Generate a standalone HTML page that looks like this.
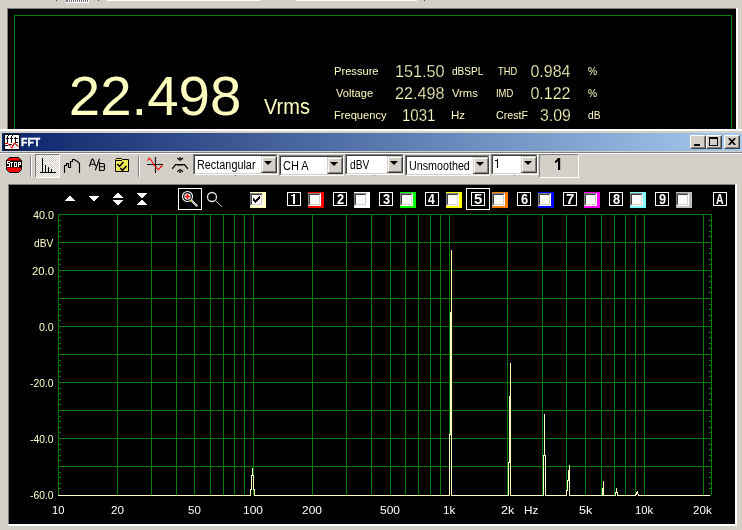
<!DOCTYPE html>
<html><head><meta charset="utf-8"><title>FFT</title>
<style>
html,body{margin:0;padding:0;}
body{width:742px;height:530px;background:#d4d0c8;position:relative;overflow:hidden;font-family:"Liberation Sans",sans-serif;}
.a{position:absolute;}
.t{position:absolute;white-space:nowrap;line-height:1;transform-origin:0 50%;}
.combo{position:absolute;box-sizing:border-box;height:21px;background:#fff;border:1px solid;border-color:#808080 #fff #fff #808080;}
.combo i{position:absolute;left:0;top:0;right:0;bottom:0;border:1px solid;border-color:#404040 #d4d0c8 #d4d0c8 #404040;}
.combo b{position:absolute;right:0;top:1px;width:16px;height:17px;box-sizing:border-box;background:#d4d0c8;border:1px solid;border-color:#d4d0c8 #404040 #404040 #d4d0c8;}
.combo b:before{content:"";position:absolute;left:0;top:0;right:0;bottom:0;border:1px solid;border-color:#fff #808080 #808080 #fff;}
.combo b:after{content:"";position:absolute;left:2px;top:4px;border:4px solid transparent;border-top:4px solid #000;border-bottom:none;width:0;height:0;}
.nb{position:absolute;box-sizing:border-box;width:14px;height:14px;border:1px solid #fff;}
.cb{position:absolute;width:16px;height:16px;}
.cb i{position:absolute;left:0;top:1px;width:13px;height:13px;box-sizing:border-box;background:#fff;border:1px solid;border-color:#808080 #fff #fff #808080;}
.cb i:before{content:"";position:absolute;left:0;top:0;right:0;bottom:0;border:1px solid;border-color:#404040 #d4d0c8 #d4d0c8 #404040;}
.wb{position:absolute;top:135px;width:16px;height:14px;box-sizing:border-box;background:#d4d0c8;border:1px solid;border-color:#fff #404040 #404040 #fff;}
.wb:before{content:"";position:absolute;left:0;top:0;right:0;bottom:0;border:1px solid;border-color:#d4d0c8 #808080 #808080 #d4d0c8;}
</style></head><body>

<div class="a" style="left:66px;top:0;width:23px;height:3px;background:#fff"></div>
<div class="a" style="left:67px;top:0;width:21px;height:2px;background:repeating-linear-gradient(to right,#707070 0,#707070 1px,#fff 1px,#fff 2px)"></div>
<div class="a" style="left:66px;top:0;width:1px;height:2px;background:#808080"></div>
<div class="a" style="left:56px;top:0;width:1px;height:1px;background:#404040"></div>
<div class="a" style="left:98px;top:0;width:1px;height:1px;background:#404040"></div>
<div class="a" style="left:424px;top:0;width:1px;height:1px;background:#404040"></div>
<div class="a" style="left:107px;top:0;width:153px;height:1px;background:#fff"></div>
<div class="a" style="left:296px;top:0;width:121px;height:1px;background:#fff"></div>
<div class="a" style="left:7px;top:8px;width:731px;height:121px;background:#fff"></div>
<div class="a" style="left:7px;top:8px;width:729px;height:121px;background:#808080"></div>
<div class="a" style="left:8px;top:9px;width:728px;height:120px;background:#000"></div>
<div class="a" style="left:14px;top:15px;width:716px;height:114px;border:1px solid #008000;border-bottom:none"></div>
<div class="a" style="left:0;top:129px;width:742px;height:2px;background:#fff"></div>
<div class="a" style="left:0;top:131px;width:742px;height:54px;background:#d4d0c8"></div>
<div class="a" style="left:2px;top:133px;width:740px;height:18px;background:linear-gradient(to right,#0a246a,#a6caf0)"></div>
<svg class="a" style="left:0;top:130px" width="24" height="24" viewBox="0 130 24 24">
<rect x="4" y="134" width="16" height="16" fill="#000"/><rect x="5" y="135" width="14" height="14" fill="#fff"/>
<g shape-rendering="crispEdges" fill="#000">
<rect x="7" y="136" width="1" height="7"/><rect x="6" y="138" width="3" height="1"/><rect x="8" y="135" width="1" height="1"/>
<rect x="11" y="136" width="1" height="7"/><rect x="10" y="138" width="3" height="1"/><rect x="12" y="135" width="1" height="1"/>
<rect x="15" y="137" width="1" height="6"/><rect x="14" y="138" width="4" height="1"/><rect x="16" y="142" width="2" height="1"/>
</g>
<path d="M5 145.500H8L9 144.500H11.500L12.500 145.500H13.500L14.500 143L18 146.500" stroke="#000" stroke-width="1" fill="none"/>
<path d="M5 143.500H8L12 148.300L13.800 143.500H15.500L18.500 146.500" stroke="#f00" stroke-width="1" fill="none"/>
</svg>
<div class="wb" style="left:690px"><div class="a" style="left:3px;top:8px;width:6px;height:2px;background:#000"></div></div>
<div class="wb" style="left:706px"><div class="a" style="left:2px;top:1px;width:9px;height:9px;box-sizing:border-box;border:1px solid #000;border-top-width:2px"></div></div>
<div class="wb" style="left:724px"><svg class="a" style="left:3px;top:2px" width="8" height="7" viewBox="0 0 8 7"><path d="M0.800 0L7.200 7M7.200 0L0.800 7" stroke="#000" stroke-width="1.700" fill="none"/></svg></div>
<div class="a" style="left:0;top:152px;width:742px;height:1px;background:#808080"></div>
<div class="a" style="left:0;top:153px;width:742px;height:1px;background:#fff"></div>
<div class="a" style="left:35px;top:154px;width:25px;height:24px;box-sizing:border-box;background:repeating-conic-gradient(#fff 0% 25%,#d4d0c8 0% 50%) 0 0/2px 2px;border:1px solid;border-color:#808080 #fff #fff #808080"></div>
<svg class="a" style="left:0;top:150px" width="200" height="32" viewBox="0 150 200 32">
<!-- stop -->
<polygon points="9.500,157.500 18.500,157.500 21.500,160.500 21.500,169.500 18.500,172.500 9.500,172.500 6.500,169.500 6.500,160.500" fill="#f00" stroke="#000" stroke-width="1"/>
<rect x="6.500" y="160.500" width="15" height="7" fill="#000"/>
<g shape-rendering="crispEdges" fill="#fff"><rect x="7" y="161" width="1" height="1"/><rect x="8" y="161" width="1" height="1"/><rect x="9" y="161" width="1" height="1"/><rect x="7" y="162" width="1" height="1"/><rect x="7" y="163" width="1" height="1"/><rect x="8" y="163" width="1" height="1"/><rect x="9" y="163" width="1" height="1"/><rect x="9" y="164" width="1" height="1"/><rect x="9" y="165" width="1" height="1"/><rect x="7" y="166" width="1" height="1"/><rect x="8" y="166" width="1" height="1"/><rect x="9" y="166" width="1" height="1"/><rect x="10" y="162" width="1" height="1"/><rect x="11" y="162" width="1" height="1"/><rect x="12" y="162" width="1" height="1"/><rect x="11" y="163" width="1" height="1"/><rect x="11" y="164" width="1" height="1"/><rect x="11" y="165" width="1" height="1"/><rect x="11" y="166" width="1" height="1"/><rect x="14" y="162" width="1" height="1"/><rect x="15" y="162" width="1" height="1"/><rect x="16" y="162" width="1" height="1"/><rect x="14" y="163" width="1" height="1"/><rect x="16" y="163" width="1" height="1"/><rect x="14" y="164" width="1" height="1"/><rect x="16" y="164" width="1" height="1"/><rect x="14" y="165" width="1" height="1"/><rect x="16" y="165" width="1" height="1"/><rect x="14" y="166" width="1" height="1"/><rect x="15" y="166" width="1" height="1"/><rect x="16" y="166" width="1" height="1"/><rect x="18" y="162" width="1" height="1"/><rect x="19" y="162" width="1" height="1"/><rect x="20" y="162" width="1" height="1"/><rect x="18" y="163" width="1" height="1"/><rect x="20" y="163" width="1" height="1"/><rect x="18" y="164" width="1" height="1"/><rect x="19" y="164" width="1" height="1"/><rect x="20" y="164" width="1" height="1"/><rect x="18" y="165" width="1" height="1"/><rect x="18" y="166" width="1" height="1"/></g>
<!-- bars -->
<g shape-rendering="crispEdges" fill="#000">
<rect x="42" y="158" width="1" height="15"/><rect x="45" y="165" width="1" height="8"/><rect x="48" y="167" width="1" height="6"/><rect x="51" y="169" width="1" height="4"/><rect x="40" y="172" width="16" height="1"/>
</g>
<!-- mountain -->
<path d="M64.500 173V165.500H66.500V163.500H68.500V167.500H70.500V161.500H72.500V159.500H74.500L75.500 160.500L77.500 161.500L78.500 162.500L79.500 163.500V173" stroke="#000" stroke-width="1.150" fill="none" stroke-linejoin="miter"/>
<!-- A/B -->
<g stroke="#000" stroke-width="1.100" fill="none">
<path d="M89.300 166.500L90.500 163.500L91.500 160L92.500 159L93.500 160L94.500 163.500L95.700 166.200M90.500 164.300H94.500"/>
<path d="M99.500 158.800L95.300 170.400"/>
<path d="M99.500 162V171M99.500 163.500H103.500L104.500 164.500V169.500L103.500 170.500H99.500M99.500 166.700H104"/>
</g>
<!-- folder check -->
<path d="M115.500 159.500L116.500 158.500H121.500L122.500 159.500H128.500V171.500H115.500Z" fill="#ecec58" stroke="#000" stroke-width="1"/>
<path d="M116 160.500H122" stroke="#000" stroke-width="1"/>
<path d="M117.300 164l2.200 2.300l4-4.200M120.300 168l2.200 2.300l4-4.200" stroke="#000" stroke-width="1.500" fill="none"/>
<!-- crosshair -->
<g shape-rendering="crispEdges"><rect x="155" y="157" width="1" height="16" fill="#000"/><rect x="147" y="164" width="16" height="1" fill="#000"/></g>
<path d="M154 158.500h3M154 160.500h3M154 162.500h3M154 166.500h3M154 168.500h3M154 170.500h3M149.500 163.500v2M151.500 163.500v2M153.500 163.500v2M157.500 163.500v2M159.500 163.500v2M161.500 163.500v2" stroke="#707070" stroke-width="0.600" fill="none"/>
<path d="M147.300 160.600L149.500 158.200L151.500 160.500L154 165L156 167.200L158.300 169.600L162.600 165" stroke="#f00" stroke-width="1.100" fill="none"/>
<!-- smoothing -->
<path d="M172.300 168.800L175.500 164.700H184.500L187.800 168.800" stroke="#000" stroke-width="1.300" fill="none"/>
<path d="M177.500 165.300h1M179.500 165.300h1M181.500 165.300h1" stroke="#000" stroke-width="0.900"/>
<path d="M177.300 158l2.900 2.200l2.900-2.200" stroke="#000" stroke-width="1.100" fill="none"/><rect x="179.300" y="157.300" width="1.800" height="1.600" fill="#000"/>
<path d="M177.300 171.700l2.900-2.200l2.900 2.200" stroke="#000" stroke-width="1.100" fill="none"/><rect x="179.300" y="171.300" width="1.800" height="1.600" fill="#000"/>
</svg>

<div class="a" style="left:30px;top:156px;width:1px;height:21px;background:#808080"></div>
<div class="a" style="left:31px;top:156px;width:1px;height:21px;background:#fff"></div>
<div class="a" style="left:138px;top:156px;width:1px;height:21px;background:#808080"></div>
<div class="a" style="left:139px;top:156px;width:1px;height:21px;background:#fff"></div>
<div class="combo" style="left:193px;top:154px;width:85px"><i></i><b></b></div>
<div class="combo" style="left:279px;top:155px;width:65px"><i></i><b></b></div>
<div class="combo" style="left:345px;top:154px;width:59px"><i></i><b></b></div>
<div class="combo" style="left:405px;top:155px;width:85px"><i></i><b></b></div>
<div class="combo" style="left:491px;top:154px;width:47px"><i></i><b></b></div>
<div class="a" style="left:539px;top:154px;width:40px;height:24px;box-sizing:border-box;border:1px solid;border-color:#808080 #fff #fff #808080"></div>
<div class="a" style="left:235px;top:175px;width:1px;height:1px;background:#808080"></div>
<div class="a" style="left:374px;top:175px;width:1px;height:1px;background:#808080"></div>
<div class="a" style="left:514px;top:175px;width:1px;height:1px;background:#808080"></div>
<div class="a" style="left:8px;top:184px;width:729px;height:342px;background:#fff"></div>
<div class="a" style="left:8px;top:184px;width:727px;height:340px;background:#808080"></div>
<div class="a" style="left:9px;top:185px;width:726px;height:339px;background:#000"></div>
<svg class="a" style="left:60px;top:190px" width="95" height="18" viewBox="60 190 95 18" shape-rendering="crispEdges"><g fill="#fff"><rect x="69" y="196" width="2" height="1"/><rect x="68" y="197" width="4" height="1"/><rect x="67" y="198" width="6" height="1"/><rect x="66" y="199" width="8" height="1"/><rect x="65" y="200" width="10" height="1"/><rect x="93" y="200" width="2" height="1"/><rect x="92" y="199" width="4" height="1"/><rect x="91" y="198" width="6" height="1"/><rect x="90" y="197" width="8" height="1"/><rect x="89" y="196" width="10" height="1"/><rect x="117" y="193" width="2" height="1"/><rect x="116" y="194" width="4" height="1"/><rect x="115" y="195" width="6" height="1"/><rect x="114" y="196" width="8" height="1"/><rect x="113" y="197" width="10" height="1"/><rect x="117" y="204" width="2" height="1"/><rect x="116" y="203" width="4" height="1"/><rect x="115" y="202" width="6" height="1"/><rect x="114" y="201" width="8" height="1"/><rect x="113" y="200" width="10" height="1"/><rect x="141" y="197" width="2" height="1"/><rect x="140" y="196" width="4" height="1"/><rect x="139" y="195" width="6" height="1"/><rect x="138" y="194" width="8" height="1"/><rect x="137" y="193" width="10" height="1"/><rect x="141" y="200" width="2" height="1"/><rect x="140" y="201" width="4" height="1"/><rect x="139" y="202" width="6" height="1"/><rect x="138" y="203" width="8" height="1"/><rect x="137" y="204" width="10" height="1"/></g></svg>
<div class="a" style="left:178px;top:188px;width:24px;height:22px;box-sizing:border-box;border:1px solid #fff"></div>
<svg class="a" style="left:176px;top:186px" width="50" height="26" viewBox="176 186 50 26">
<circle cx="187.500" cy="196.500" r="5" fill="#000" stroke="#fff" stroke-width="1.100"/>
<circle cx="187.500" cy="196.500" r="3.200" fill="#eef6f6"/>
<path d="M185 196.500h5M187.500 194v5" stroke="#f00" stroke-width="1.500"/>
<path d="M191.500 200.500l5.800 5.800" stroke="#fff" stroke-width="2"/>
<path d="M191.800 200.800l5.200 5.200" stroke="#000" stroke-width="0.700" stroke-dasharray="0.700 0.700"/>
<rect x="191" y="200.500" width="1.300" height="1.500" fill="#ff0"/>
<circle cx="212" cy="197" r="4.500" fill="#000" stroke="#e4e4e4" stroke-width="1.300"/>
<path d="M215.300 200.300l6.500 6.500" stroke="#c8c8c8" stroke-width="1"/></svg>

<svg class="a" style="left:0;top:150px" width="742" height="60" viewBox="0 150 742 60"><g shape-rendering="crispEdges"><rect x="497" y="159" width="1" height="9" fill="#000"/><rect x="495" y="160" width="2" height="1" fill="#000"/><rect x="293" y="194" width="2" height="10" fill="#fff"/><rect x="291" y="195" width="2" height="1" fill="#fff"/></g><polygon points="558,158 560.2,158 560.2,170 558,170 558,161.3 555.4,163.3 554.8,161.2 557,159.300" fill="#000"/></svg>
<div class="cb" style="left:250px;top:192px;background:#ffffc0"><i></i><svg class="a" style="left:3px;top:4px" width="7" height="7" viewBox="0 0 7 7" shape-rendering="crispEdges"><path d="M0 2v3l2 2l5-5v-3l-5 5z" fill="#000"/></svg></div>
<div class="nb" style="left:287px;top:192px"></div>
<div class="cb" style="left:308px;top:192px;background:#ff0000"><i></i></div>
<div class="nb" style="left:333px;top:192px"></div>
<div class="cb" style="left:354px;top:192px;background:#ffffff"><i></i></div>
<div class="nb" style="left:379px;top:192px"></div>
<div class="cb" style="left:400px;top:192px;background:#00ff00"><i></i></div>
<div class="nb" style="left:425px;top:192px"></div>
<div class="cb" style="left:446px;top:192px;background:#ffff00"><i></i></div>
<div class="a" style="left:466px;top:188px;width:24px;height:22px;box-sizing:border-box;border:1px solid #fff"></div>
<div class="nb" style="left:471px;top:192px"></div>
<div class="cb" style="left:492px;top:192px;background:#ff8000"><i></i></div>
<div class="nb" style="left:517px;top:192px"></div>
<div class="cb" style="left:538px;top:192px;background:#0000ff"><i></i></div>
<div class="nb" style="left:563px;top:192px"></div>
<div class="cb" style="left:584px;top:192px;background:#ff00ff"><i></i></div>
<div class="nb" style="left:609px;top:192px"></div>
<div class="cb" style="left:630px;top:192px;background:#80ffff"><i></i></div>
<div class="nb" style="left:655px;top:192px"></div>
<div class="cb" style="left:676px;top:192px;background:#c0c0c0"><i></i></div>
<div class="nb" style="left:713px;top:192px"></div>
<svg class="a" style="left:0;top:0" width="742" height="530" viewBox="0 0 742 530" shape-rendering="crispEdges">
<rect x="58" y="214" width="1" height="282" fill="#008000"/>
<rect x="117" y="214" width="1" height="282" fill="#008000"/>
<rect x="151" y="214" width="1" height="282" fill="#008000"/>
<rect x="176" y="214" width="1" height="282" fill="#008000"/>
<rect x="194" y="214" width="1" height="282" fill="#008000"/>
<rect x="210" y="214" width="1" height="282" fill="#008000"/>
<rect x="223" y="214" width="1" height="282" fill="#008000"/>
<rect x="234" y="214" width="1" height="282" fill="#008000"/>
<rect x="244" y="214" width="1" height="282" fill="#008000"/>
<rect x="253" y="214" width="1" height="282" fill="#008000"/>
<rect x="312" y="214" width="1" height="282" fill="#008000"/>
<rect x="346" y="214" width="1" height="282" fill="#008000"/>
<rect x="371" y="214" width="1" height="282" fill="#008000"/>
<rect x="390" y="214" width="1" height="282" fill="#008000"/>
<rect x="405" y="214" width="1" height="282" fill="#008000"/>
<rect x="418" y="214" width="1" height="282" fill="#008000"/>
<rect x="430" y="214" width="1" height="282" fill="#008000"/>
<rect x="440" y="214" width="1" height="282" fill="#008000"/>
<rect x="449" y="214" width="1" height="282" fill="#008000"/>
<rect x="507" y="214" width="1" height="282" fill="#008000"/>
<rect x="542" y="214" width="1" height="282" fill="#008000"/>
<rect x="566" y="214" width="1" height="282" fill="#008000"/>
<rect x="585" y="214" width="1" height="282" fill="#008000"/>
<rect x="601" y="214" width="1" height="282" fill="#008000"/>
<rect x="614" y="214" width="1" height="282" fill="#008000"/>
<rect x="625" y="214" width="1" height="282" fill="#008000"/>
<rect x="635" y="214" width="1" height="282" fill="#008000"/>
<rect x="644" y="214" width="1" height="282" fill="#008000"/>
<rect x="703" y="214" width="1" height="282" fill="#008000"/>
<rect x="711" y="214" width="1" height="281" fill="#008000"/>
<rect x="58" y="214" width="654" height="1" fill="#008000"/>
<rect x="58" y="242" width="654" height="1" fill="#008000"/>
<rect x="58" y="270" width="654" height="1" fill="#008000"/>
<rect x="58" y="298" width="654" height="1" fill="#008000"/>
<rect x="58" y="326" width="654" height="1" fill="#008000"/>
<rect x="58" y="354" width="654" height="1" fill="#008000"/>
<rect x="58" y="382" width="654" height="1" fill="#008000"/>
<rect x="58" y="410" width="654" height="1" fill="#008000"/>
<rect x="58" y="438" width="654" height="1" fill="#008000"/>
<rect x="58" y="466" width="654" height="1" fill="#008000"/>
<rect x="59" y="220" width="2" height="1" fill="#008000"/>
<rect x="709" y="220" width="2" height="1" fill="#008000"/>
<rect x="59" y="225" width="2" height="1" fill="#008000"/>
<rect x="709" y="225" width="2" height="1" fill="#008000"/>
<rect x="59" y="231" width="2" height="1" fill="#008000"/>
<rect x="709" y="231" width="2" height="1" fill="#008000"/>
<rect x="59" y="236" width="2" height="1" fill="#008000"/>
<rect x="709" y="236" width="2" height="1" fill="#008000"/>
<rect x="59" y="248" width="2" height="1" fill="#008000"/>
<rect x="709" y="248" width="2" height="1" fill="#008000"/>
<rect x="59" y="253" width="2" height="1" fill="#008000"/>
<rect x="709" y="253" width="2" height="1" fill="#008000"/>
<rect x="59" y="259" width="2" height="1" fill="#008000"/>
<rect x="709" y="259" width="2" height="1" fill="#008000"/>
<rect x="59" y="264" width="2" height="1" fill="#008000"/>
<rect x="709" y="264" width="2" height="1" fill="#008000"/>
<rect x="59" y="276" width="2" height="1" fill="#008000"/>
<rect x="709" y="276" width="2" height="1" fill="#008000"/>
<rect x="59" y="281" width="2" height="1" fill="#008000"/>
<rect x="709" y="281" width="2" height="1" fill="#008000"/>
<rect x="59" y="287" width="2" height="1" fill="#008000"/>
<rect x="709" y="287" width="2" height="1" fill="#008000"/>
<rect x="59" y="292" width="2" height="1" fill="#008000"/>
<rect x="709" y="292" width="2" height="1" fill="#008000"/>
<rect x="59" y="304" width="2" height="1" fill="#008000"/>
<rect x="709" y="304" width="2" height="1" fill="#008000"/>
<rect x="59" y="309" width="2" height="1" fill="#008000"/>
<rect x="709" y="309" width="2" height="1" fill="#008000"/>
<rect x="59" y="315" width="2" height="1" fill="#008000"/>
<rect x="709" y="315" width="2" height="1" fill="#008000"/>
<rect x="59" y="320" width="2" height="1" fill="#008000"/>
<rect x="709" y="320" width="2" height="1" fill="#008000"/>
<rect x="59" y="332" width="2" height="1" fill="#008000"/>
<rect x="709" y="332" width="2" height="1" fill="#008000"/>
<rect x="59" y="337" width="2" height="1" fill="#008000"/>
<rect x="709" y="337" width="2" height="1" fill="#008000"/>
<rect x="59" y="343" width="2" height="1" fill="#008000"/>
<rect x="709" y="343" width="2" height="1" fill="#008000"/>
<rect x="59" y="348" width="2" height="1" fill="#008000"/>
<rect x="709" y="348" width="2" height="1" fill="#008000"/>
<rect x="59" y="360" width="2" height="1" fill="#008000"/>
<rect x="709" y="360" width="2" height="1" fill="#008000"/>
<rect x="59" y="365" width="2" height="1" fill="#008000"/>
<rect x="709" y="365" width="2" height="1" fill="#008000"/>
<rect x="59" y="371" width="2" height="1" fill="#008000"/>
<rect x="709" y="371" width="2" height="1" fill="#008000"/>
<rect x="59" y="376" width="2" height="1" fill="#008000"/>
<rect x="709" y="376" width="2" height="1" fill="#008000"/>
<rect x="59" y="388" width="2" height="1" fill="#008000"/>
<rect x="709" y="388" width="2" height="1" fill="#008000"/>
<rect x="59" y="393" width="2" height="1" fill="#008000"/>
<rect x="709" y="393" width="2" height="1" fill="#008000"/>
<rect x="59" y="399" width="2" height="1" fill="#008000"/>
<rect x="709" y="399" width="2" height="1" fill="#008000"/>
<rect x="59" y="404" width="2" height="1" fill="#008000"/>
<rect x="709" y="404" width="2" height="1" fill="#008000"/>
<rect x="59" y="416" width="2" height="1" fill="#008000"/>
<rect x="709" y="416" width="2" height="1" fill="#008000"/>
<rect x="59" y="421" width="2" height="1" fill="#008000"/>
<rect x="709" y="421" width="2" height="1" fill="#008000"/>
<rect x="59" y="427" width="2" height="1" fill="#008000"/>
<rect x="709" y="427" width="2" height="1" fill="#008000"/>
<rect x="59" y="432" width="2" height="1" fill="#008000"/>
<rect x="709" y="432" width="2" height="1" fill="#008000"/>
<rect x="59" y="444" width="2" height="1" fill="#008000"/>
<rect x="709" y="444" width="2" height="1" fill="#008000"/>
<rect x="59" y="449" width="2" height="1" fill="#008000"/>
<rect x="709" y="449" width="2" height="1" fill="#008000"/>
<rect x="59" y="455" width="2" height="1" fill="#008000"/>
<rect x="709" y="455" width="2" height="1" fill="#008000"/>
<rect x="59" y="460" width="2" height="1" fill="#008000"/>
<rect x="709" y="460" width="2" height="1" fill="#008000"/>
<rect x="59" y="472" width="2" height="1" fill="#008000"/>
<rect x="709" y="472" width="2" height="1" fill="#008000"/>
<rect x="59" y="477" width="2" height="1" fill="#008000"/>
<rect x="709" y="477" width="2" height="1" fill="#008000"/>
<rect x="59" y="483" width="2" height="1" fill="#008000"/>
<rect x="709" y="483" width="2" height="1" fill="#008000"/>
<rect x="59" y="488" width="2" height="1" fill="#008000"/>
<rect x="709" y="488" width="2" height="1" fill="#008000"/>
<rect x="58" y="495" width="652" height="1" fill="#ffffc0"/>
<rect x="710" y="495" width="1" height="1" fill="#008000"/>
<rect x="251" y="495" width="3" height="1" fill="#000"/>
<rect x="250" y="489" width="1" height="7" fill="#ffffc0"/>
<rect x="251" y="475" width="1" height="15" fill="#ffffc0"/>
<rect x="252" y="468" width="1" height="8" fill="#ffffc0"/>
<rect x="253" y="475" width="1" height="15" fill="#ffffc0"/>
<rect x="254" y="489" width="1" height="7" fill="#ffffc0"/>
<rect x="450" y="495" width="1" height="1" fill="#000"/>
<rect x="449" y="434" width="1" height="62" fill="#ffffc0"/>
<rect x="450" y="312" width="1" height="123" fill="#ffffc0"/>
<rect x="451" y="250" width="1" height="246" fill="#ffffc0"/>
<rect x="509" y="495" width="1" height="1" fill="#000"/>
<rect x="508" y="462" width="1" height="34" fill="#ffffc0"/>
<rect x="509" y="396" width="1" height="67" fill="#ffffc0"/>
<rect x="510" y="363" width="1" height="133" fill="#ffffc0"/>
<rect x="544" y="495" width="1" height="1" fill="#000"/>
<rect x="543" y="455" width="1" height="41" fill="#ffffc0"/>
<rect x="544" y="414" width="1" height="42" fill="#ffffc0"/>
<rect x="545" y="455" width="1" height="41" fill="#ffffc0"/>
<rect x="567" y="495" width="2" height="1" fill="#000"/>
<rect x="566" y="490" width="1" height="6" fill="#ffffc0"/>
<rect x="567" y="480" width="1" height="11" fill="#ffffc0"/>
<rect x="568" y="470" width="1" height="11" fill="#ffffc0"/>
<rect x="569" y="465" width="1" height="31" fill="#ffffc0"/>
<rect x="602" y="488" width="1" height="8" fill="#ffffc0"/>
<rect x="603" y="481" width="1" height="15" fill="#ffffc0"/>
<rect x="616" y="495" width="1" height="1" fill="#000"/>
<rect x="615" y="492" width="1" height="4" fill="#ffffc0"/>
<rect x="616" y="488" width="1" height="5" fill="#ffffc0"/>
<rect x="617" y="492" width="1" height="4" fill="#ffffc0"/>
<rect x="636" y="495" width="2" height="1" fill="#000"/>
<rect x="635" y="494" width="1" height="2" fill="#ffffc0"/>
<rect x="636" y="492" width="1" height="3" fill="#ffffc0"/>
<rect x="637" y="491" width="1" height="3" fill="#ffffc0"/>
<rect x="638" y="494" width="1" height="2" fill="#ffffc0"/>
</svg>
<div class="a" style="left:0;top:0;width:742px;height:530px;will-change:transform">
<div class="t" style="left:68.80px;top:67.70px;font-size:56.4px;color:#ffffc0;">22.498</div>
<div class="t" style="left:264.30px;top:97.00px;font-size:21.4px;color:#ffffc0;transform:scaleX(0.935);">Vrms</div>
<div class="t" style="left:333.69px;top:66.00px;font-size:11px;color:#ffffc0;transform:scaleX(1.012);">Pressure</div>
<div class="t" style="left:335.90px;top:88.00px;font-size:11px;color:#ffffc0;transform:scaleX(1.011);">Voltage</div>
<div class="t" style="left:334.49px;top:110.00px;font-size:11px;color:#ffffc0;transform:scaleX(1.010);">Frequency</div>
<div class="t" style="left:395.09px;top:64.00px;font-size:16px;color:#ffffc0;transform:scaleX(1.011);-webkit-text-stroke:0.25px #000;">151.50</div>
<div class="t" style="left:394.89px;top:86.00px;font-size:16px;color:#ffffc0;transform:scaleX(1.011);-webkit-text-stroke:0.25px #000;">22.498</div>
<div class="t" style="left:401.96px;top:108.00px;font-size:16px;color:#ffffc0;transform:scaleX(0.938);-webkit-text-stroke:0.25px #000;">1031</div>
<div class="t" style="left:451.80px;top:66.00px;font-size:11px;color:#ffffc0;transform:scaleX(0.918);">dBSPL</div>
<div class="t" style="left:451.80px;top:88.00px;font-size:11px;color:#ffffc0;transform:scaleX(1.020);">Vrms</div>
<div class="t" style="left:450.75px;top:110.00px;font-size:11px;color:#ffffc0;transform:scaleX(1.050);">Hz</div>
<div class="t" style="left:497.50px;top:66.00px;font-size:11px;color:#ffffc0;transform:scaleX(0.845);">THD</div>
<div class="t" style="left:496.04px;top:88.00px;font-size:11px;color:#ffffc0;transform:scaleX(0.858);">IMD</div>
<div class="t" style="left:495.93px;top:110.00px;font-size:11px;color:#ffffc0;transform:scaleX(0.969);">CrestF</div>
<div class="t" style="left:530.40px;top:64.00px;font-size:16px;color:#ffffc0;-webkit-text-stroke:0.25px #000;">0.984</div>
<div class="t" style="left:530.40px;top:86.00px;font-size:16px;color:#ffffc0;-webkit-text-stroke:0.25px #000;">0.122</div>
<div class="t" style="left:539.71px;top:108.00px;font-size:16px;color:#ffffc0;transform:scaleX(0.990);-webkit-text-stroke:0.25px #000;">3.09</div>
<div class="t" style="left:587.80px;top:66.00px;font-size:11px;color:#ffffc0;transform:scaleX(0.930);">%</div>
<div class="t" style="left:587.80px;top:88.00px;font-size:11px;color:#ffffc0;transform:scaleX(0.930);">%</div>
<div class="t" style="left:587.80px;top:110.00px;font-size:11px;color:#ffffc0;transform:scaleX(0.923);">dB</div>
<div class="t" style="left:20.65px;top:137.00px;font-size:11px;color:#fff;font-weight:bold;transform:scaleX(0.953);-webkit-text-stroke:0.3px #fff;">FFT</div>
<div class="t" style="left:196.93px;top:159.00px;font-size:12.5px;color:#000;transform:scaleX(0.868);">Rectangular</div>
<div class="t" style="left:282.82px;top:160.00px;font-size:12.5px;color:#000;transform:scaleX(0.879);">CH A</div>
<div class="t" style="left:349.80px;top:159.00px;font-size:12.5px;color:#000;transform:scaleX(0.817);">dBV</div>
<div class="t" style="left:408.94px;top:160.00px;font-size:12.5px;color:#000;transform:scaleX(0.858);">Unsmoothed</div>
<div class="t" style="left:32.70px;top:210.00px;font-size:11px;color:#ffffc0;transform:scaleX(0.986);">40.0</div>
<div class="t" style="left:34.00px;top:238.00px;font-size:11px;color:#ffffc0;transform:scaleX(0.924);">dBV</div>
<div class="t" style="left:31.77px;top:266.00px;font-size:11px;color:#ffffc0;transform:scaleX(1.030);">20.0</div>
<div class="t" style="left:38.90px;top:322.00px;font-size:11px;color:#ffffc0;transform:scaleX(0.967);">0.0</div>
<div class="t" style="left:30.00px;top:378.00px;font-size:11px;color:#ffffc0;transform:scaleX(0.936);">-20.0</div>
<div class="t" style="left:30.00px;top:434.00px;font-size:11px;color:#ffffc0;transform:scaleX(0.936);">-40.0</div>
<div class="t" style="left:30.00px;top:490.00px;font-size:11px;color:#ffffc0;transform:scaleX(0.936);">-60.0</div>
<div class="t" style="left:51.88px;top:504.50px;font-size:11px;color:#fff;transform:scaleX(1.018);">10</div>
<div class="t" style="left:110.59px;top:504.50px;font-size:11px;color:#fff;transform:scaleX(1.064);">20</div>
<div class="t" style="left:187.70px;top:504.50px;font-size:11px;color:#fff;transform:scaleX(1.045);">50</div>
<div class="t" style="left:243.16px;top:504.50px;font-size:11px;color:#fff;transform:scaleX(1.088);">100</div>
<div class="t" style="left:302.16px;top:504.50px;font-size:11px;color:#fff;transform:scaleX(1.088);">200</div>
<div class="t" style="left:380.16px;top:504.50px;font-size:11px;color:#fff;transform:scaleX(1.088);">500</div>
<div class="t" style="left:443.20px;top:504.50px;font-size:11px;color:#fff;transform:scaleX(1.050);">1k</div>
<div class="t" style="left:500.60px;top:504.50px;font-size:11px;color:#fff;transform:scaleX(1.150);">2k</div>
<div class="t" style="left:578.60px;top:504.50px;font-size:11px;color:#fff;transform:scaleX(1.150);">5k</div>
<div class="t" style="left:634.72px;top:504.50px;font-size:11px;color:#fff;transform:scaleX(1.029);">10k</div>
<div class="t" style="left:693.44px;top:504.50px;font-size:11px;color:#fff;transform:scaleX(1.059);">20k</div>
<div class="t" style="left:523.63px;top:504.50px;font-size:11px;color:#fff;transform:scaleX(1.067);">Hz</div>
<div class="t" style="left:336.90px;top:193.00px;font-size:13.8px;color:#fff;font-weight:bold;transform:scaleX(0.929);">2</div>
<div class="t" style="left:382.90px;top:193.00px;font-size:13.8px;color:#fff;font-weight:bold;transform:scaleX(0.929);">3</div>
<div class="t" style="left:428.40px;top:193.00px;font-size:13.8px;color:#fff;font-weight:bold;transform:scaleX(0.875);">4</div>
<div class="t" style="left:473.82px;top:193.00px;font-size:13.8px;color:#fff;font-weight:bold;transform:scaleX(1.083);">5</div>
<div class="t" style="left:520.90px;top:193.00px;font-size:13.8px;color:#fff;font-weight:bold;transform:scaleX(0.929);">6</div>
<div class="t" style="left:565.82px;top:193.00px;font-size:13.8px;color:#fff;font-weight:bold;transform:scaleX(1.083);">7</div>
<div class="t" style="left:612.90px;top:193.00px;font-size:13.8px;color:#fff;font-weight:bold;transform:scaleX(0.929);">8</div>
<div class="t" style="left:658.90px;top:193.00px;font-size:13.8px;color:#fff;font-weight:bold;transform:scaleX(0.929);">9</div>
<div class="t" style="left:716.20px;top:193.00px;font-size:13.8px;color:#fff;font-weight:bold;transform:scaleX(0.760);">A</div>
</div>
</body></html>
